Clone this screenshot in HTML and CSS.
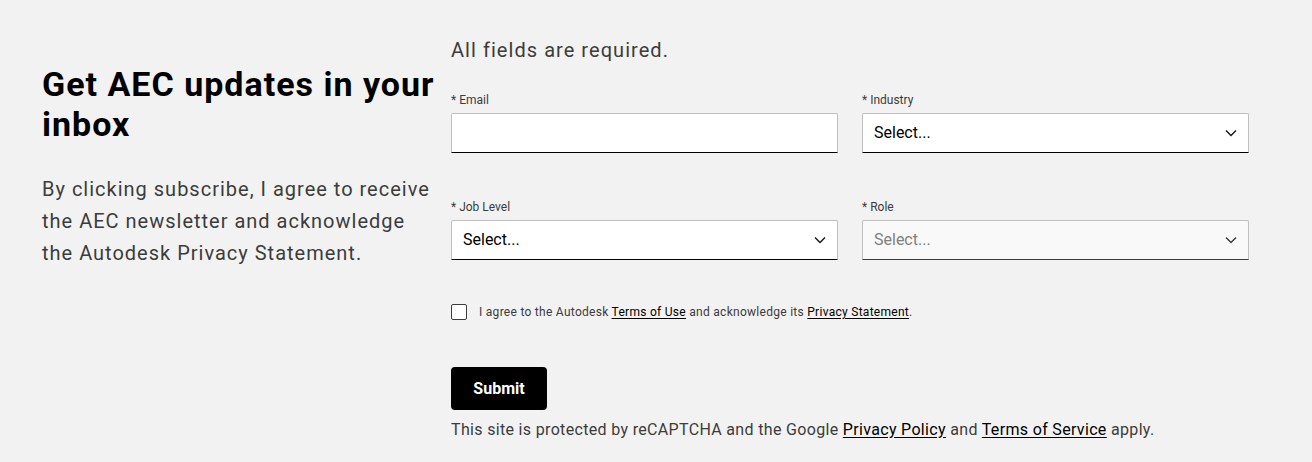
FILE: index.html
```html
<!DOCTYPE html>
<html lang="en">
<head>
<meta charset="utf-8">
<title>Get AEC updates</title>
<link rel="stylesheet" href="styles.css">
</head>
<body>
<div class="page">
  <div class="intro">
    <h2 class="title">Get AEC updates in your inbox</h2>
    <p class="lead">By clicking subscribe, I agree to receive the AEC newsletter and acknowledge the Autodesk Privacy Statement.</p>
  </div>
  <form class="form">
    <p class="required">All fields are required.</p>
    <div class="grid">
      <div class="field">
        <label class="label">* Email</label>
        <div class="input"></div>
      </div>
      <div class="field">
        <label class="label">* Industry</label>
        <div class="input select"><span>Select...</span><svg class="chev" viewBox="0 0 12 8" width="12" height="8"><path d="M1 1.5l5 5 5-5" fill="none" stroke="#1a1a1a" stroke-width="1.5"/></svg></div>
      </div>
      <div class="field">
        <label class="label">* Job Level</label>
        <div class="input select"><span>Select...</span><svg class="chev" viewBox="0 0 12 8" width="12" height="8"><path d="M1 1.5l5 5 5-5" fill="none" stroke="#1a1a1a" stroke-width="1.5"/></svg></div>
      </div>
      <div class="field">
        <label class="label">* Role</label>
        <div class="input select disabled"><span>Select...</span><svg class="chev" viewBox="0 0 12 8" width="12" height="8"><path d="M1 1.5l5 5 5-5" fill="none" stroke="#3c3c3c" stroke-width="1.5"/></svg></div>
      </div>
    </div>
    <div class="agree">
      <span class="box"></span>
      <span class="agree-text">I agree to the Autodesk <a href="#">Terms of Use</a> and acknowledge its <a href="#">Privacy Statement</a>.</span>
    </div>
    <button type="button" class="submit">Submit</button>
    <p class="captcha">This site is protected by reCAPTCHA and the Google <a href="#">Privacy Policy</a> and <a href="#">Terms of Service</a> apply.</p>
  </form>
</div>
</body>
</html>
```
FILE: styles.css
```css
html, body {
  margin: 0;
  padding: 0;
  background: #f2f2f2;
}
body {
  font-family: Roboto, "Liberation Sans", sans-serif;
  color: #3c3c3c;
  width: 1312px;
  height: 462px;
  overflow: hidden;
}
.page {
  display: flex;
  padding-left: 42px;
  gap: 9px;
}
.intro {
  width: 400px;
  padding-top: 64px;
}
.title {
  margin: 0;
  font-size: 34px;
  line-height: 40px;
  font-weight: 700;
  color: #000;
  letter-spacing: 1px;
}
.lead {
  margin: 29px 0 0;
  font-size: 20px;
  line-height: 32px;
  color: #3c3c3c;
  letter-spacing: 1px;
}
.form {
  width: 798px;
  padding-top: 36px;
  display: flex;
  flex-direction: column;
}
.required {
  margin: 0;
  font-size: 20px;
  line-height: 28px;
  color: #3c3c3c;
  letter-spacing: 1.05px;
}
.grid {
  margin-top: 28px;
  display: grid;
  grid-template-columns: 387px 387px;
  column-gap: 24px;
  row-gap: 46px;
}
.field {
  display: flex;
  flex-direction: column;
}
.label {
  font-size: 12px;
  line-height: 16px;
  color: #3c3c3c;
  margin-bottom: 5px;
}
.input {
  box-sizing: border-box;
  height: 40px;
  background: #fff;
  border: 1px solid #bfbfbf;
  border-bottom: 1px solid #000;
  border-radius: 2px 2px 0 0;
}
.select {
  display: flex;
  align-items: center;
  justify-content: space-between;
  padding: 0 11px 1px 11px;
  font-size: 16px;
  color: #000;
}
.disabled {
  background: #f9f9f9;
  color: #808080;
  border-bottom-color: #3c3c3c;
}
.chev {
  display: block;
}
.agree {
  margin-top: 44px;
  display: flex;
  align-items: center;
  height: 16px;
}
.box {
  box-sizing: border-box;
  width: 16px;
  height: 16px;
  border: 1px solid #3c3c3c;
  border-radius: 2px;
  background: #fff;
  margin-right: 12px;
}
.agree-text {
  font-size: 12px;
  line-height: 16px;
  color: #3c3c3c;
  letter-spacing: 0.28px;
}
.agree-text a, .captcha a {
  color: #000;
  text-decoration: underline;
  text-underline-offset: 2px;
}
.submit {
  margin-top: 47px;
  width: 96px;
  height: 43px;
  border: 0;
  border-radius: 4px;
  background: #000;
  color: #fff;
  font-family: inherit;
  font-size: 16px;
  font-weight: 700;
  padding: 0;
  text-align: center;
}
.captcha {
  margin: 8px 0 0;
  font-size: 16px;
  line-height: 24px;
  color: #3c3c3c;
  letter-spacing: 0.33px;
}
```
